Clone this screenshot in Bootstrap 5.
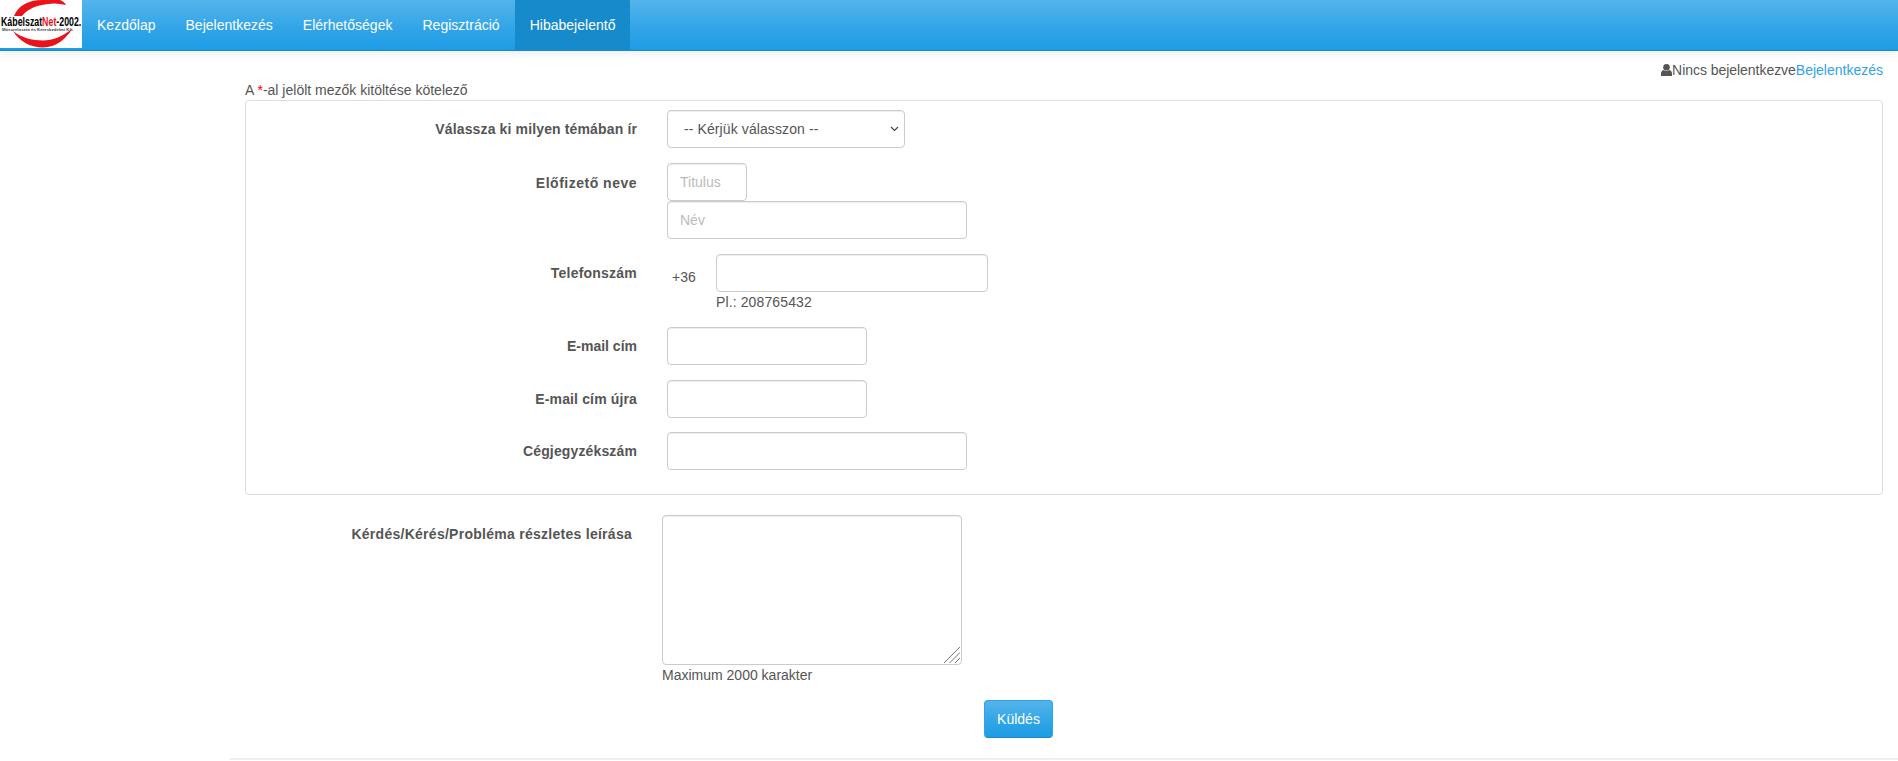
<!DOCTYPE html>
<html lang="hu">
<head>
<meta charset="utf-8">
<title>Hibabejelentő</title>
<link href="https://cdn.jsdelivr.net/npm/bootstrap@5.3.0/dist/css/bootstrap.min.css" rel="stylesheet">
<style>
html,body{height:761px;overflow:hidden}
body{font-family:"Liberation Sans",Arial,sans-serif;font-size:14px;line-height:20px;color:#555;background:#fff}
.topbar{height:51px;padding:0;align-items:stretch;flex-wrap:nowrap;justify-content:flex-start;background:linear-gradient(#54b4eb,#2fa4e7 60%,#1d9ce5);border-bottom:1px solid #178acc;box-shadow:0 1px 10px rgba(0,0,0,.1)}
.logo-box{width:82px;height:48px;background:#fff;display:block;flex:none;overflow:hidden}
.logo-box svg{display:block}
.topbar .nav-link{color:#fff;padding:15px;line-height:20px;font-size:14px;letter-spacing:.012px}
.topbar .nav-link.is-current{background:#178acc}
.page-body{margin-left:230px;padding:0 15px}
.status-line{height:20px;margin-top:9px;color:#555;letter-spacing:-.04px}
.status-line a{color:#2fa4e7;text-decoration:none;letter-spacing:0}
.status-line svg{vertical-align:-1px}
.req-note{height:20px;margin:0}
.req-note span{color:red}
.form-frame{border:1px solid #ddd;border-radius:4px;height:395px;padding-top:9px}
.f-row{display:flex}
.f-label{width:391px;flex:none;text-align:right;font-weight:700;color:#555;margin:0;padding-top:9px}
.f-label.lower{padding-top:10px}
.sp-0{letter-spacing:0}
.sp-1{letter-spacing:.14px}
.sp-2{letter-spacing:.22px}
.sp-3{letter-spacing:.5px}
.f-ctrl{margin-left:30px}
.f-input{display:block;height:38px;padding:8px 12px;font-size:14px;line-height:20px;color:#555;border:1px solid #ccc;border-radius:4px;box-shadow:inset 0 1px 1px rgba(0,0,0,.075);background:#fff}
.f-input::placeholder{color:#bbb;opacity:1}
.f-select{width:238px;appearance:none;padding:6px 12px 6px 16px;letter-spacing:.1px;background:#fff url("data:image/svg+xml,%3Csvg xmlns='http://www.w3.org/2000/svg' width='9' height='6' viewBox='0 0 9 6'%3E%3Cpath d='M1 1l3.500 3.500L8 1' fill='none' stroke='%23444' stroke-width='1.200'/%3E%3C/svg%3E") no-repeat right 5px center}
.w-title{width:80px}
.w-wide{width:300px}
.w-mail{width:200px}
.w-phone{width:272px}
.row-a{margin-bottom:15px}
.row-b{margin-bottom:15px}
.row-c{margin-bottom:15px}
.row-d{margin-bottom:15px}
.row-e{margin-bottom:14px}
.prefix{width:49px;padding:13px 0 0 5px;flex:none}
.phone-hint{letter-spacing:.12px}
.area-row{margin-top:20px}
.area-label{width:387px;flex:none;text-align:right;font-weight:700;letter-spacing:.27px;margin:0;padding-top:9px}
.area-ctrl{margin-left:30px}
.area-wrap{width:300px;height:150px}
.f-area{display:block;width:300px;height:150px;padding:8px 12px;border:1px solid #ccc;border-radius:4px;box-shadow:inset 0 1px 1px rgba(0,0,0,.075);resize:none}
.grip{position:absolute;right:2px;bottom:2px;display:block}
.send-wrap{padding-left:739px;margin-top:15px}
.send-btn{display:block;height:38px;width:69px;padding:0;color:#fff;font-size:14px;border:1px solid #2fa4e7;border-color:#2fa4e7 #2fa4e7 #178acc;border-radius:4px;background:linear-gradient(#54b4eb,#2fa4e7 60%,#1d9ce5)}
.foot-rule{height:2px;background:#eee;margin:20px 0 0 -15px;width:1668px}
</style>
</head>
<body>
<nav class="navbar topbar">
  <a class="logo-box" href="#" aria-label="KábelszatNet-2002">
    <svg width="82" height="48" viewBox="0 0 82 48">
      <path d="M14 16C18 6 28 0 42 0H60C63 1 65 3 66 5C58 3 50 3 42 5C32 7 26 11 22 16Z" fill="#e8131b"/>
      <path d="M13 31C19 41 30 47.500 43 47.500C56 47.500 66 39 72 29C63 36 53 40.500 43 40.500C32 40.500 21 37.500 13 31Z" fill="#e8131b"/>
      <g transform="translate(1 25.500) scale(.735 1)">
        <text font-family="Liberation Sans" font-weight="700" font-size="12" fill="#000">Kábelszat<tspan fill="#e8131b">Net</tspan>-2002.</text>
      </g>
      <g transform="translate(2 31) scale(1.14 1)">
        <text font-family="Liberation Sans" font-weight="700" font-size="3.800" fill="#444">Műsorelosztó és Kereskedelmi Kft.</text>
      </g>
    </svg>
  </a>
  <ul class="navbar-nav flex-row">
    <li class="nav-item"><a class="nav-link" href="#">Kezdőlap</a></li>
    <li class="nav-item"><a class="nav-link" href="#">Bejelentkezés</a></li>
    <li class="nav-item"><a class="nav-link" href="#">Elérhetőségek</a></li>
    <li class="nav-item"><a class="nav-link" href="#">Regisztráció</a></li>
    <li class="nav-item"><a class="nav-link is-current" href="#">Hibabejelentő</a></li>
  </ul>
</nav>
<main class="page-body">
  <div class="status-line text-end">
    <svg width="11" height="12" viewBox="0 0 11 12" aria-hidden="true"><circle cx="5.500" cy="3.300" r="3.300" fill="#555"/><path d="M0 12V9.500C0 7.500 1.500 6 3 6C4 7.200 7 7.200 8 6C9.500 6 11 7.500 11 9.500V12Z" fill="#555"/></svg>Nincs bejelentkezve<a href="#">Bejelentkezés</a>
  </div>
  <p class="req-note">A <span>*</span>-al jelölt mezők kitöltése kötelező</p>
  <form>
    <div class="form-frame">
      <div class="f-row row-a">
        <label class="f-label sp-1">Válassza ki milyen témában ír</label>
        <div class="f-ctrl"><select class="f-input f-select"><option>-- Kérjük válasszon --</option></select></div>
      </div>
      <div class="f-row row-b">
        <label class="f-label lower sp-3">Előfizető neve</label>
        <div class="f-ctrl">
          <input class="f-input w-title" placeholder="Titulus">
          <input class="f-input w-wide" placeholder="Név">
        </div>
      </div>
      <div class="f-row row-c">
        <label class="f-label sp-2">Telefonszám</label>
        <div class="f-ctrl d-flex">
          <span class="prefix">+36</span>
          <div><input class="f-input w-phone"><div class="phone-hint">Pl.: 208765432</div></div>
        </div>
      </div>
      <div class="f-row row-d">
        <label class="f-label sp-0">E-mail cím</label>
        <div class="f-ctrl"><input class="f-input w-mail"></div>
      </div>
      <div class="f-row row-e">
        <label class="f-label sp-1">E-mail cím újra</label>
        <div class="f-ctrl"><input class="f-input w-mail"></div>
      </div>
      <div class="f-row">
        <label class="f-label sp-1">Cégjegyzékszám</label>
        <div class="f-ctrl"><input class="f-input w-wide"></div>
      </div>
    </div>
    <div class="f-row area-row">
      <label class="area-label">Kérdés/Kérés/Probléma részletes leírása</label>
      <div class="area-ctrl">
        <div class="area-wrap position-relative">
          <textarea class="f-area"></textarea>
          <svg class="grip" width="16" height="16" viewBox="0 0 16 16" aria-hidden="true"><path d="M0 16L16 0M5.500 16L16 5.500M11 16L16 11" stroke="#777" stroke-width="1" fill="none"/></svg>
        </div>
        <div>Maximum 2000 karakter</div>
      </div>
    </div>
    <div class="send-wrap"><button type="button" class="send-btn">Küldés</button></div>
  </form>
  <div class="foot-rule"></div>
</main>
<script src="https://cdn.jsdelivr.net/npm/bootstrap@5.3.0/dist/js/bootstrap.bundle.min.js"></script>
</body>
</html>
